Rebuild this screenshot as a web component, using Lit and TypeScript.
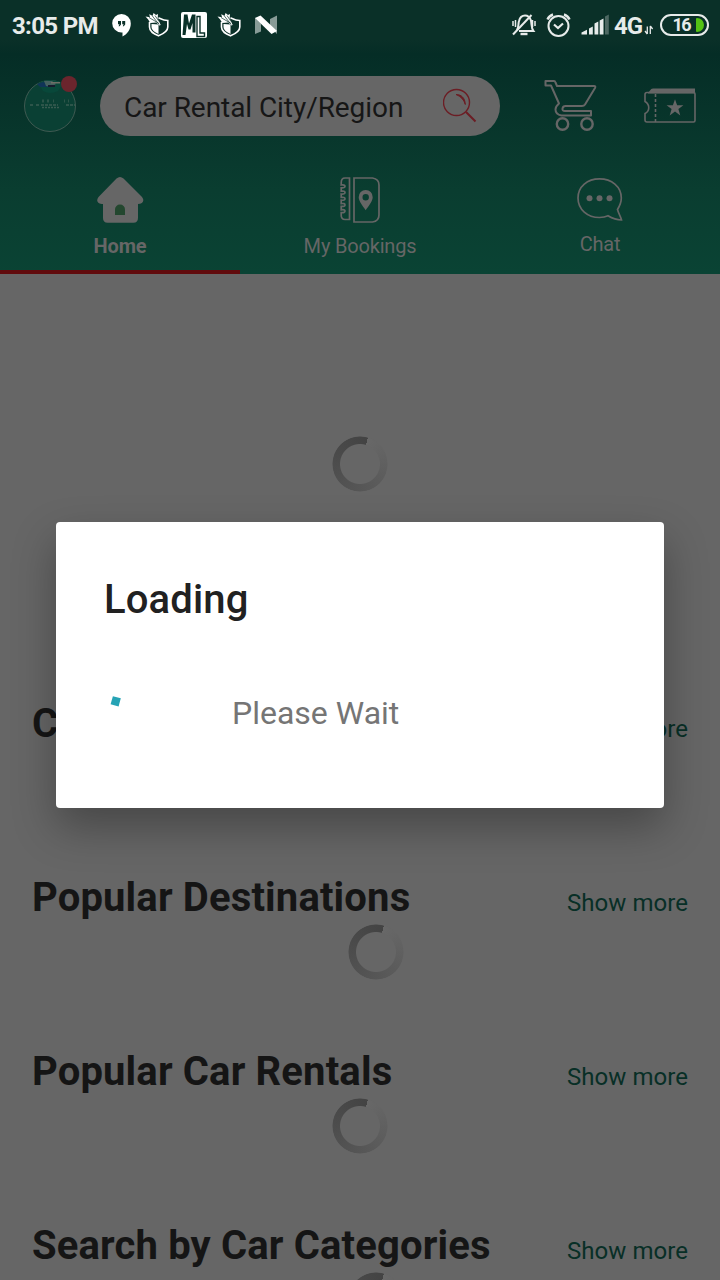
import { LitElement, html, css, svg } from "lit";
import { customElement, property } from "lit/decorators.js";

@customElement("status-bar")
class StatusBar extends LitElement {
  static styles = css`
    :host { display: flex; height: 50px; box-sizing: border-box; padding: 0 12px; align-items: center; color: #e7ebea; justify-content: space-between; }
    .side { display: flex; align-items: center; height: 50px; }
    .time { font-size: 24px; font-weight: 700; line-height: 28px; width: 99px; padding-top: 2px; white-space: nowrap; letter-spacing: -0.65px; }
    .net { font-size: 24px; font-weight: 700; line-height: 28px; padding-top: 2px; width: 30px; margin-left: 4px; letter-spacing: -1px; }
    svg { display: block; flex: none; }
    .right { margin-right: -1px; }
    .battery { box-sizing: border-box; width: 49px; height: 22px; border: 2.2px solid #e7ebea; border-radius: 11px; display: flex; align-items: center; justify-content: flex-end; margin: 0 0 1px 6px; padding-right: 3px; gap: 6px; font-size: 18px; font-weight: 700; letter-spacing: -1.6px; }
    .charge { width: 8px; height: 14px; border-radius: 1px 7px 7px 1px; background: #55c314; }
  `;
  shield() {
    return svg`
      <path d="M149.500 22v5c0 5 4.500 7 9 8.800 5-2 9.300-4.300 9.300-8.800v-6.500c-4 0-6-1.200-9.300-2.800" fill="none" stroke="#fff" stroke-width="1.600"/>
      <path d="M151.500 24l7 .5v9.500c-4-2-7-3.500-7-7.500z" fill="#fff"/>
      <path d="M145.500 16.500l4.500.7-.8-3 3.500 1.500.8-2.700 2.500 2 2-1-.3 4.500 3 6.500-1.500.5-3-3-6 .5-2-3.500z" fill="#fff"/>
      <path d="M149 17.500l10 6m-7-8l7 9m-4-9l4 6" stroke="#0a3028" stroke-width=".7"/>`;
  }
  render() {
    return html`
      <div class="side">
        <span class="time">3:05 PM</span>
        <svg width="168" height="30" viewBox="111 10 168 30">
          <path d="M121.500 14a9.300 9.300 0 0 0 0 18.600h1v3.800c4.500-2.200 8.300-7 8.300-13A9.300 9.300 0 0 0 121.500 14z" fill="#fff"/>
          <path d="M118 21h3v3.500l-1.400 1.700h-1l.8-2H118zm4.200 0h3v3.500l-1.400 1.700h-1l.8-2h-1.400z" fill="#0a3028"/>
          ${this.shield()}
          <rect x="181" y="12" width="26" height="26" rx="2" fill="#fff"/>
          <path d="M182.500 35l1.500-20.500h3.500l1.500 9 3-9h3.500v18h-3V23l-2 6.500h-2l-1.500-5.500-1.500 11z" fill="#0a3028"/>
          <path d="M197 16.500h3v16.500h4.500v3.500H197z" fill="#fff" stroke="#0a3028" stroke-width="1.400"/>
          <g transform="translate(72 0)">${this.shield()}</g>
          <path d="M255 17.500l6 6v8l-6 2.500zM277 15.500V34l-7-7v-8z" fill="#889b97"/>
          <path d="M255 18l5.500-2.500L277 31l-5.500 3z" fill="#fff"/>
        </svg>
      </div>
      <div class="side right">
        <svg width="100" height="30" viewBox="510 10 100 30" fill="none" stroke="#e7ebea" stroke-width="2">
          <path d="M517 30c2-3 1-6 2-9 1-4 3-5.500 6-5.500s5 2 6 5c.8 4 0 7 2.500 10.500H519"/>
          <path d="M513 34.500L531.500 15" />
          <path d="M513 21v5m2.500-6v7M532.500 20v7m2.500-6v5" stroke-width="1.500"/>
          <path d="M520.500 34h7" stroke-width="2.400"/>
          <circle cx="558.500" cy="26" r="10"/>
          <path d="M554 24.500l4 3.500 5-4.500" stroke-width="2.200"/>
          <path d="M547.500 19.500c1-2.500 3-4.200 5.500-5m11 0c2.500.8 4.500 2.500 5.500 5" stroke-width="2.400"/>
          <g stroke="none" fill="#e7ebea">
            <path d="M581.500 34.500v-2l5.500-2.800v4.800z"/><path d="M589 34.500v-6l3.800-2v8zM594.500 34.500v-11l3.800-2v13zM599.700 34.500v-14l3.800-2v16z"/>
            <path d="M605 34.500v-18l3.800-2v20z" fill="#4d6862"/>
          </g>
        </svg>
        <span class="net">4G</span>
        <svg width="10" height="30" viewBox="644 10 10 30" fill="none" stroke="#e7ebea" stroke-width="1.300">
          <path d="M647.300 34v-7.500M645 31l2.300 3M650.300 26v8M650.300 26l2.300 3"/>
        </svg>
        <div class="battery"><span>16</span><div class="charge"></div></div>
      </div>`;
  }
}

@customElement("top-bar")
class TopBar extends LitElement {
  static styles = css`
    :host { display: flex; height: 112px; box-sizing: border-box; padding: 26px 23px 0 24px; align-items: flex-start; }
    svg { display: block; flex: none; }
    .search { flex: none; width: 400px; height: 60px; box-sizing: border-box; border-radius: 30px; background: #666; margin-left: 20px; padding: 0 23px 0 24px; display: flex; align-items: center; justify-content: space-between; font-size: 28px; color: #161616; white-space: nowrap; }
    .label { padding-top: 2px; letter-spacing: -0.06px; }
    .cart { margin-left: 43px; }
    .ticket { margin-left: 46px; }
  `;
  render() {
    return html`
      <svg width="56" height="60" viewBox="24 76 56 60">
        <circle cx="50" cy="106" r="25.500" fill="#0a4034" stroke="#4c625b" stroke-width=".8"/>
        <path d="M38 83q12-6 25 0l-5 8q-8 4-15 0z" fill="#08483a"/>
        <path d="M37 84l6-2 5 1 1 4h-9z" fill="#103457"/><path d="M44 81h8l4 3-5 3-5-1z" fill="#45615f"/>
        <path d="M51 82h9v1.500h-9z" fill="#6e7067"/><path d="M48 86h7" stroke="#161b2d" stroke-width="2"/>
        <path d="M42 101h2m3 0h2m4 0h1m10 0h1m3 0h1" stroke="#2c5549" stroke-width="3"/>
        <path d="M30 105h4m2 0h3m2 0h17m8 0h3m1 0h5" stroke="#3a5c52" stroke-width="1.400" stroke-dasharray="3 1"/>
        <path d="M42 107.500h18" stroke="#3a5c52" stroke-width="1.500" stroke-dasharray="2 1"/>
        <circle cx="69" cy="84" r="8" fill="#6b252d"/>
      </svg>
      <div class="search">
        <span class="label">Car Rental City/Region</span>
        <svg width="34" height="36" viewBox="443 88 34 36" fill="none" stroke="#6c1d24">
          <circle cx="456.500" cy="102.500" r="13" stroke-width="1.400"/>
          <path d="M466 112l9.500 9.500" stroke-width="2"/>
          <path d="M456 94.500c5 0 9 3 9.300 10-1.500-5-4.300-8-9.300-10z" stroke-width="1" fill="#6c1d24"/>
        </svg>
      </div>
      <svg class="cart" width="55" height="56" viewBox="543 76 55 56" fill="none" stroke="#666" stroke-width="2" stroke-linejoin="round">
        <path d="M545.500 81h8.500q1 0 1.500 1.500l1.500 3.500h37q2 0 1 2l-10 16.500q-1 1.500-3 1.500h-16.500q-2.500 0-3 2.500t2.500 2.500h26v4.500h-29.500q-6-1-6-6 0-3 3.500-6l-8-18h-5.500z"/>
        <circle cx="562.500" cy="124" r="5.700" stroke-width="2.400"/><circle cx="587" cy="124" r="5.700" stroke-width="2.400"/>
      </svg>
      <svg class="ticket" width="53" height="52" viewBox="644 76 53 52">
        <path d="M648 93l2-2.500q1-2 3-2h42v5h-47z" fill="#666"/>
        <path d="M647 92.500h46.500q1.500 0 1.500 1.500v26.500q0 1.500-1.500 1.500H647q-2 0-2-2v-6.500c5-2.500 5-9 0-12V94.500q0-2 2-2z" fill="none" stroke="#666" stroke-width="1.600"/>
        <path d="M655.500 94v28" stroke="#666" stroke-width="1.600" stroke-dasharray="3 2"/>
        <path d="M675 99.300l2.100 5.900h6.300l-5 3.800 1.900 6.400-5.300-3.800-5.300 3.800 1.900-6.400-5-3.800h6.300z" fill="#666"/>
      </svg>`;
  }
}

@customElement("tab-bar")
class TabBar extends LitElement {
  static styles = css`
    :host { display: grid; grid-template-columns: repeat(3, 1fr); height: 112px; }
    .tab { display: flex; flex-direction: column; align-items: center; box-sizing: border-box; padding-top: 14px; font-size: 20px; line-height: 24px; color: #666; gap: 10px; letter-spacing: -0.18px; }
    .active { font-weight: 700; border-bottom: 4px solid #610b0d; }
    .chat { gap: 8px; }
    svg { display: block; flex: none; }
  `;
  render() {
    return html`
      <div class="tab active">
        <svg width="48" height="48" viewBox="96 176 48 48">
          <path d="M116.500 178.500q3.500-3 7 0l18.500 18.500c3 4 .500 7-4 7v14q0 4.700-4.700 4.700h-25.600q-4.700 0-4.700-4.700v-14c-5 0-7.500-3-4.500-7z" fill="#666"/>
          <path d="M115 215v-5.500a5 5 0 0 1 10 0v5.500z" fill="#23472f"/>
        </svg>
        <span>Home</span>
      </div>
      <div class="tab">
        <svg width="42" height="48" viewBox="339 176 42 48" fill="none" stroke="#666" stroke-width="1.700">
          <path d="M354 178h18.500q6.500 1 6.500 7v30q0 6-6.500 7H354z" />
          <path d="M349.500 178H345q-3.800 0-3.800 5v2q3.800-.500 3.800 1.300t-3.800 1.500v3.400q3.800-.500 3.800 1.300t-3.800 1.500v3.400q3.800-.500 3.800 1.300t-3.800 1.500v3.400q3.800-.500 3.800 1.300t-3.800 1.500v3.400q3.800-.500 3.800 1.300t-3.800 1.500v2.700q0 4.200 3.800 4.200h4.500z" />
          <path fill-rule="evenodd" stroke="none" fill="#666" d="M365.700 190a7 7 0 0 0-7 7.200c0 4 4 8.500 7 13 3-4.500 7-9 7-13a7 7 0 0 0-7-7.200zm0 4a3.200 3.200 0 1 1 0 6.400 3.200 3.200 0 0 1 0-6.400z"/>
        </svg>
        <span>My Bookings</span>
      </div>
      <div class="tab chat">
        <svg width="48" height="48" viewBox="576 176 48 48" fill="none" stroke="#666" stroke-width="1.700">
          <path d="M617.500 209.500c1 4 3.500 7.500 4 10.500-5 0-9-1.500-13.500-4.200-3 1.500-5.500 1.700-8.500 1.700-12 0-21.500-8-21.500-19.500s9.500-19.200 21.500-19.200 21.800 7.700 21.800 19.200c0 4.500-1.300 7.500-3.800 11.500z"/>
          <g fill="#666" stroke="none"><circle cx="589.500" cy="198.300" r="3"/><circle cx="599.500" cy="198.300" r="3"/><circle cx="609.500" cy="198.300" r="3"/></g>
        </svg>
        <span>Chat</span>
      </div>`;
  }
}

@customElement("ring-spinner")
class RingSpinner extends LitElement {
  static styles = css`
    :host { display: block; width: 56px; height: 56px; flex: none; border-radius: 50%;
      background: conic-gradient(from 17deg, #686868, #606060 20%, #555 48%, #4b4b4b 75%, #434343);
      -webkit-mask: radial-gradient(circle, transparent 19.5px, #000 20.5px, #000 27px, transparent 28px);
      mask: radial-gradient(circle, transparent 19.5px, #000 20.5px, #000 27px, transparent 28px); }
  `;
}

@customElement("list-section")
class ListSection extends LitElement {
  @property() heading = "";
  static styles = css`
    :host { display: block; height: 174px; }
    .row { display: flex; justify-content: space-between; align-items: baseline; padding: 0 32px; height: 50px; }
    .title { font-size: 40px; line-height: 47px; font-weight: 700; color: #151515; white-space: nowrap; letter-spacing: 0.15px; }
    .more { font-size: 24px; color: #082f26; white-space: nowrap; letter-spacing: 0.05px; }
    .body { display: flex; justify-content: center; }
  `;
  render() {
    return html`
      <div class="row"><span class="title">${this.heading}</span><span class="more">Show more</span></div>
      <div class="body"><slot></slot></div>`;
  }
}

@customElement("loading-dialog")
class LoadingDialog extends LitElement {
  static styles = css`
    :host { display: block; box-sizing: border-box; width: 608px; height: 286px; padding: 54px 48px 0; border-radius: 4px; background: #fff;
      box-shadow: 0 19px 44px rgba(0,0,0,.31); }
    .title { font-size: 40px; line-height: 47px; font-weight: 500; color: #212121; letter-spacing: 0.15px; }
    .row { display: flex; align-items: flex-start; margin-top: 71px; }
    svg { display: block; width: 128px; height: 24px; }
    .msg { font-size: 32px; line-height: 38px; color: #757575; }
  `;
  render() {
    return html`
      <div class="title">Loading</div>
      <div class="row">
        <svg viewBox="104 694 128 24"><path d="M112.900 696.300l7.900 2-2.200 8.200-8-2.200z" fill="#26a3b5"/></svg>
        <span class="msg">Please Wait</span>
      </div>`;
  }
}

@customElement("app-root")
class AppRoot extends LitElement {
  static styles = css`
    :host { display: block; position: relative; width: 720px; height: 1280px; overflow: hidden; background: #666; font-family: Roboto, sans-serif; }
    .head { height: 274px; background: linear-gradient(#0a3028 0, #0a3028 40px, #052d26 54px, #0a3d30 190px, #0a4334 274px); }
    .hero { display: flex; justify-content: center; box-sizing: border-box; height: 426px; padding-top: 162px; }
    .shift { margin-left: 32px; }
    .overlay { position: absolute; top: 0; left: 0; width: 720px; height: 1280px; box-sizing: border-box; padding: 522px 56px 0; }
  `;
  render() {
    return html`
      <div class="head"><status-bar></status-bar><top-bar></top-bar><tab-bar></tab-bar></div>
      <div class="hero"><ring-spinner></ring-spinner></div>
      <list-section heading="C"></list-section>
      <list-section heading="Popular Destinations"><ring-spinner class="shift"></ring-spinner></list-section>
      <list-section heading="Popular Car Rentals"><ring-spinner></ring-spinner></list-section>
      <list-section heading="Search by Car Categories"><ring-spinner class="shift"></ring-spinner></list-section>
      <div class="overlay"><loading-dialog></loading-dialog></div>`;
  }
}
